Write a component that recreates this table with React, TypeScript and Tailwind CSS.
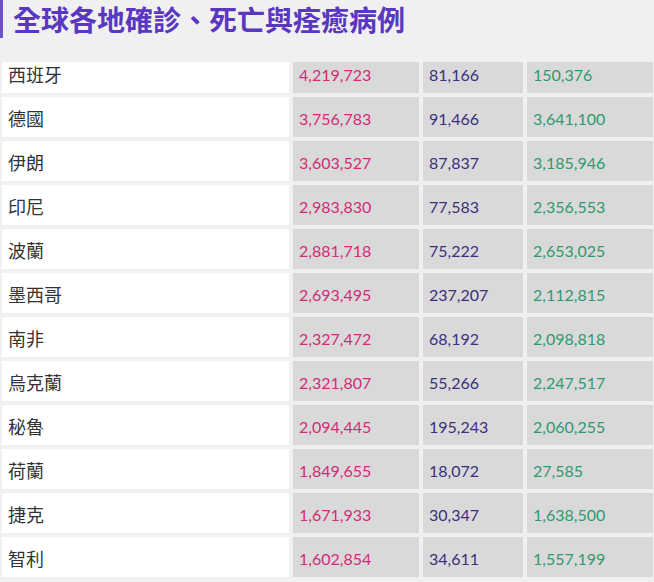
const rows = [
  { name: "西班牙", cases: "4,219,723", deaths: "81,166", recovered: "150,376" },
  { name: "德國", cases: "3,756,783", deaths: "91,466", recovered: "3,641,100" },
  { name: "伊朗", cases: "3,603,527", deaths: "87,837", recovered: "3,185,946" },
  { name: "印尼", cases: "2,983,830", deaths: "77,583", recovered: "2,356,553" },
  { name: "波蘭", cases: "2,881,718", deaths: "75,222", recovered: "2,653,025" },
  { name: "墨西哥", cases: "2,693,495", deaths: "237,207", recovered: "2,112,815" },
  { name: "南非", cases: "2,327,472", deaths: "68,192", recovered: "2,098,818" },
  { name: "烏克蘭", cases: "2,321,807", deaths: "55,266", recovered: "2,247,517" },
  { name: "秘魯", cases: "2,094,445", deaths: "195,243", recovered: "2,060,255" },
  { name: "荷蘭", cases: "1,849,655", deaths: "18,072", recovered: "27,585" },
  { name: "捷克", cases: "1,671,933", deaths: "30,347", recovered: "1,638,500" },
  { name: "智利", cases: "1,602,854", deaths: "34,611", recovered: "1,557,199" },
];

const cjk = { fontFamily: '"Noto Sans CJK TC", "Noto Sans", sans-serif' };
const num = { fontFamily: 'Lato, "Noto Sans", sans-serif' };

export default function App() {
  return (
    <div className="w-[654px] h-[582px] bg-[#f0f0f0] overflow-hidden">
      <div className="h-[62px]">
        <h1
          className="h-[38px] border-l-[3px] border-[#6a4fd0] pl-[10px] text-[28px] leading-[38px] font-bold text-[#5a37c2] whitespace-nowrap"
          style={cjk}
        >
          全球各地確診、死亡與痊癒病例
        </h1>
      </div>

      <div className="overflow-hidden pl-[2px] pr-[1px]">
        <div className="-mt-[9px] flex flex-col gap-[4px]">
          {rows.map((r) => (
            <div key={r.name} className="flex h-10 gap-[4px]">
              <div className="w-[287px] bg-white flex items-center pl-[6px] pt-[2px] text-[18px] text-[#333]" style={cjk}>
                {r.name}
              </div>
              <div className="w-[126px] bg-[#d9d9d9] flex items-center pl-[6px] pt-[4px] text-[16px] text-[#d42a78]" style={num}>
                {r.cases}
              </div>
              <div className="w-[100px] bg-[#d9d9d9] flex items-center pl-[6px] pt-[4px] text-[16px] text-[#3b2f7e]" style={num}>
                {r.deaths}
              </div>
              <div className="flex-1 bg-[#d9d9d9] flex items-center pl-[6px] pt-[4px] text-[16px] text-[#2e9a6f]" style={num}>
                {r.recovered}
              </div>
            </div>
          ))}
        </div>
      </div>
    </div>
  );
}
